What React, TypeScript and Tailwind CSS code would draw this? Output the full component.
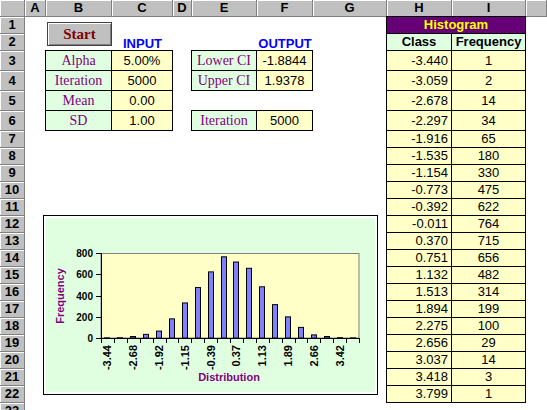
import React from 'react'

const colHeads = [
  { label: 'A', cls: 'w-[21px]' },
  { label: 'B', cls: 'w-[66px]' },
  { label: 'C', cls: 'w-[61px]' },
  { label: 'D', cls: 'w-[19px]' },
  { label: 'E', cls: 'w-[65px]' },
  { label: 'F', cls: 'w-[56px]' },
  { label: 'G', cls: 'w-[74px]' },
  { label: 'H', cls: 'w-[65px]' },
  { label: 'I', cls: 'w-[74px]' },
  { label: '', cls: 'flex-1' },
]

const rowNums = Array.from({ length: 23 }, (_, i) => i + 1)

const hist = [
  ['-3.440', 1],
  ['-3.059', 2],
  ['-2.678', 14],
  ['-2.297', 34],
  ['-1.916', 65],
  ['-1.535', 180],
  ['-1.154', 330],
  ['-0.773', 475],
  ['-0.392', 622],
  ['-0.011', 764],
  ['0.370', 715],
  ['0.751', 656],
  ['1.132', 482],
  ['1.513', 314],
  ['1.894', 199],
  ['2.275', 100],
  ['2.656', 29],
  ['3.037', 14],
  ['3.418', 3],
  ['3.799', 1],
] as const

const headCell =
  'bg-[#c0c0c0] border-r border-b border-[#808080] shadow-[inset_1px_1px_0_#fff] flex items-center justify-center text-[13px] font-bold text-black'

function Label({ children }: { children: React.ReactNode }) {
  return (
    <div className="bg-[#e0ffe0] border-r border-b border-black flex items-center justify-center font-['Liberation_Serif',serif] text-[14px] text-[#800080]">
      {children}
    </div>
  )
}

function Value({ children }: { children: React.ReactNode }) {
  return (
    <div className="bg-[#ffffc8] border-r border-b border-black flex items-center justify-center text-[13px] text-black">
      {children}
    </div>
  )
}

function Chart() {
  const px = 55
  const py = 35
  const pw = 258
  const ph = 85
  const step = pw / 20
  const base = py + ph
  return (
    <svg width="328" height="174" fontFamily="Liberation Sans, Arial, sans-serif" fontWeight="bold">
      <rect x={px} y={py + 0.5} width={pw} height={ph - 0.5} fill="#ffffc8" stroke="#808080" strokeWidth="1" />
      {hist.map(([, f], i) => {
        const c = px + (i + 0.5) * step
        const h = (f / 800) * ph
        return (
          <rect key={i} x={Math.round(c - 3) + 0.5} y={base - h} width="5" height={h} fill="#8080ff" stroke="#000" strokeWidth="1" />
        )
      })}
      <line x1={px + 0.5} y1={py} x2={px + 0.5} y2={base} stroke="#000" />
      <line x1={px} y1={base + 0.5} x2={px + pw + 1} y2={base + 0.5} stroke="#000" />
      {[0, 200, 400, 600, 800].map((v) => {
        const y = Math.round(base - (v / 800) * ph) + 0.5
        return (
          <g key={v}>
            <line x1={px - 5} y1={y} x2={px} y2={y} stroke="#000" />
            <text x={px - 8} y={y + 3.5} textAnchor="end" fontSize="10" fill="#000">
              {v}
            </text>
          </g>
        )
      })}
      {Array.from({ length: 21 }, (_, i) => {
        const x = Math.round(px + i * step) + 0.5
        return <line key={i} x1={x} y1={base} x2={x} y2={base + 5} stroke="#000" />
      })}
      {hist.map(([c], i) => {
        if (i % 2) return null
        const x = px + (i + 0.5) * step + 4
        const lbl = Number(c).toFixed(2)
        return (
          <text key={i} x={x} y={127} transform={`rotate(-90 ${x} 127)`} textAnchor="end" fontSize="11" fill="#000">
            {lbl}
          </text>
        )
      })}
      <text x={18} y={78} transform="rotate(-90 18 78)" textAnchor="middle" fontSize="11" fill="#800080">
        Frequency
      </text>
      <text x={183} y={163} textAnchor="middle" fontSize="11" fill="#800080">
        Distribution
      </text>
    </svg>
  )
}

export default function App() {
  return (
    <div className="w-[547px] h-[410px] overflow-hidden bg-white font-['Liberation_Sans',Arial,sans-serif] select-none">
      {/* Column headers */}
      <div className="flex h-[17px]">
        <div className={`${headCell} w-[25px]`} />
        {colHeads.map((c, i) => (
          <div key={i} className={`${headCell} ${c.cls}`}>
            {c.label}
          </div>
        ))}
      </div>

      <div className="flex">
        {/* Row headers */}
        <div className="flex flex-col w-[25px]">
          {rowNums.map((r) => (
            <div key={r} className={`${headCell} ${r >= 3 && r <= 6 ? 'h-[20px]' : 'h-[17px]'}`}>
              {r}
            </div>
          ))}
        </div>

        {/* Sheet */}
        <div className="flex-1 grid grid-cols-[21px_66px_61px_19px_65px_56px_74px_65px_74px_1fr] grid-rows-[17px_17px_20px_20px_20px_20px_repeat(17,17px)]">
          <button className="col-start-2 row-start-1 row-span-2 mt-[5px] ml-px w-[65px] h-[24px] self-start bg-[#c0c0c0] border border-[#404040] shadow-[inset_1px_1px_0_#fff,inset_-1px_-1px_0_#808080] flex items-center justify-center font-['Liberation_Serif',serif] font-bold text-[15px] text-[#800000]">
            Start
          </button>

          <div className="col-start-3 row-start-2 flex items-end justify-center text-[13px] leading-[15px] font-bold text-[#0000ff]">
            INPUT
          </div>
          <div className="col-start-6 row-start-2 flex items-end justify-center text-[13px] leading-[15px] font-bold text-[#0000ff]">
            OUTPUT
          </div>

          {/* Input */}
          <div className="col-start-2 col-span-2 row-start-3 row-span-4 -mt-px -ml-px grid grid-cols-[66px_61px] grid-rows-[repeat(4,20px)] border-l border-t border-black">
            <Label>Alpha</Label>
            <Value>5.00%</Value>
            <Label>Iteration</Label>
            <Value>5000</Value>
            <Label>Mean</Label>
            <Value>0.00</Value>
            <Label>SD</Label>
            <Value>1.00</Value>
          </div>

          {/* Output */}
          <div className="col-start-5 col-span-2 row-start-3 row-span-2 -mt-px -ml-px grid grid-cols-[65px_56px] grid-rows-[20px_20px] border-l border-t border-black">
            <Label>Lower CI</Label>
            <Value>-1.8844</Value>
            <Label>Upper CI</Label>
            <Value>1.9378</Value>
          </div>
          <div className="col-start-5 col-span-2 row-start-6 -mt-px -ml-px grid grid-cols-[65px_56px] grid-rows-[20px] border-l border-t border-black">
            <Label>Iteration</Label>
            <Value>5000</Value>
          </div>

          {/* Histogram table */}
          <div className="col-start-8 col-span-2 row-start-1 row-span-22 -mt-px -ml-px grid grid-cols-[65px_74px] grid-rows-[17px_17px_20px_20px_20px_20px_repeat(16,17px)] border-l border-t border-black">
            <div className="col-span-2 bg-[#660077] border-r border-b border-black flex items-center justify-center text-[13px] font-bold text-[#ffff00]">
              Histogram
            </div>
            <div className="bg-[#e0ffe0] border-r border-b border-black flex items-center justify-center text-[13px] font-bold">
              Class
            </div>
            <div className="bg-[#e0ffe0] border-r border-b border-black flex items-center justify-center text-[13px] font-bold">
              Frequency
            </div>
            {hist.map(([c, f]) => (
              <React.Fragment key={c}>
                <div className="bg-[#ffffc8] border-r border-b border-black flex items-center justify-end pr-[3px] text-[13px]">
                  {c}
                </div>
                <div className="bg-[#ffffc8] border-r border-b border-black flex items-center justify-center text-[13px]">
                  {f}
                </div>
              </React.Fragment>
            ))}
          </div>

          {/* Chart */}
          <div className="col-start-1 col-span-7 row-start-11 row-span-12 mt-[16px] ml-[18px] w-[335px] h-[180px] self-start justify-self-start border border-black bg-white p-[2px]">
            <div className="w-full h-full bg-[#e0ffe0]">
              <Chart />
            </div>
          </div>
        </div>
      </div>
    </div>
  )
}
